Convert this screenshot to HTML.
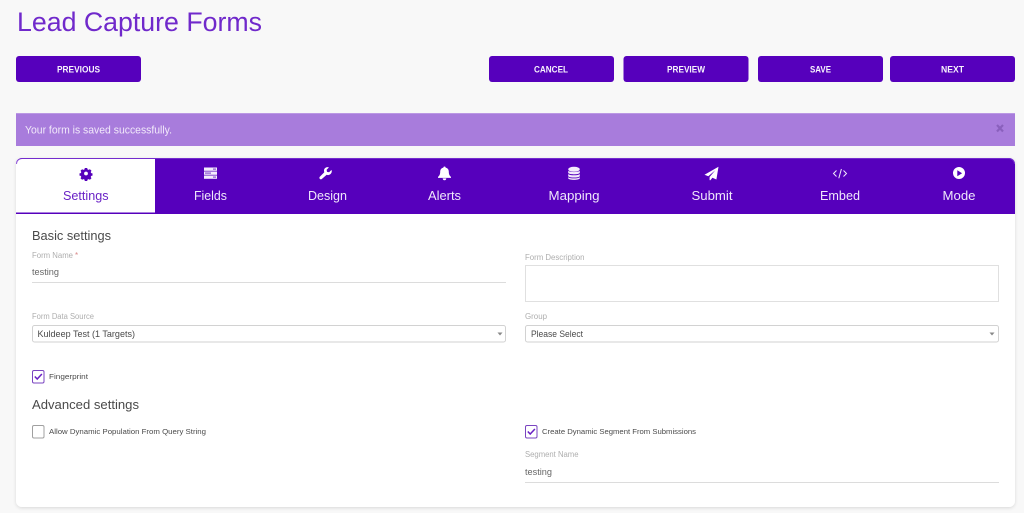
<!DOCTYPE html>
<html lang="en">
<head>
<meta charset="utf-8">
<title>Lead Capture Forms</title>
<style>
html,body{margin:0;padding:0;width:1024px;height:513px;overflow:hidden;background:#f8f8f8}
svg{display:block;font-family:"Liberation Sans",sans-serif;filter:blur(.3px)}
.btn{font-size:9px;font-weight:700;fill:#f7f2fd}
.tab{font-size:13px;fill:#efe6fb}
.lbl{font-size:8px;fill:#aeaeae}
.val{font-size:9px;fill:#666}
.sel{font-size:9px;fill:#4a4a4a}
.chk{font-size:7.5px;fill:#4a4a4a}
.hd{font-size:13px;fill:#4a4a4a}
</style>
</head>
<body>
<svg width="1024" height="513" viewBox="0 0 1024 513" xmlns="http://www.w3.org/2000/svg">
<defs>
<filter id="sh" x="-2%" y="-2%" width="104%" height="105%"><feDropShadow dx="0" dy="1" stdDeviation="1.5" flood-color="#000" flood-opacity=".13"/></filter>
</defs>
<rect width="1024" height="513" fill="#f8f8f8"/>

<text x="17" y="31" font-size="26.5" fill="#7029cb" textLength="245" lengthAdjust="spacingAndGlyphs">Lead Capture Forms</text>

<rect x="16" y="56" width="125" height="26" rx="3" fill="#5600bc"/>
<rect x="489" y="56" width="125" height="26" rx="3" fill="#5600bc"/>
<rect x="623.5" y="56" width="125" height="26" rx="3" fill="#5600bc"/>
<rect x="758" y="56" width="125" height="26" rx="3" fill="#5600bc"/>
<rect x="890" y="56" width="125" height="26" rx="3" fill="#5600bc"/>
<text class="btn" x="57" y="72.3" textLength="43" lengthAdjust="spacingAndGlyphs">PREVIOUS</text>
<text class="btn" x="534" y="72.3" textLength="34" lengthAdjust="spacingAndGlyphs">CANCEL</text>
<text class="btn" x="667" y="72.3" textLength="38" lengthAdjust="spacingAndGlyphs">PREVIEW</text>
<text class="btn" x="810" y="72.3" textLength="21" lengthAdjust="spacingAndGlyphs">SAVE</text>
<text class="btn" x="941" y="72.3" textLength="23" lengthAdjust="spacingAndGlyphs">NEXT</text>

<rect x="16" y="113" width="999" height="33" fill="#a87cdc"/>
<rect x="16" y="113" width="999" height="1" fill="#bb98e4"/>
<text x="25" y="133.5" font-size="11" fill="#f1e9fa" textLength="147" lengthAdjust="spacingAndGlyphs">Your form is saved successfully.</text>
<path d="M997 125l6 6.5M1003 125l-6 6.5" stroke="#8a60bd" stroke-width="2.2" fill="none"/>

<rect x="16" y="158" width="999" height="349" rx="6" fill="#fff" filter="url(#sh)"/>
<path d="M16 214V164a6 6 0 0 1 6-6H1009a6 6 0 0 1 6 6V214Z" fill="#5600bc"/>
<path d="M16 213V165a5.500 5.500 0 0 1 5.500-6H155V212.500H16Z" fill="#fff"/>
<path d="M16.500 164a5.500 5.500 0 0 1 5.500-5.500H1009a5.500 5.500 0 0 1 5.500 5.500" fill="none" stroke="#7f3bd4" stroke-width="1" opacity=".75"/>

<text class="tab" style="fill:#6a22c6" x="63" y="200" textLength="45.5" lengthAdjust="spacingAndGlyphs">Settings</text>
<text class="tab" x="194" y="200" textLength="33" lengthAdjust="spacingAndGlyphs">Fields</text>
<text class="tab" x="308" y="200" textLength="39" lengthAdjust="spacingAndGlyphs">Design</text>
<text class="tab" x="428" y="200" textLength="33" lengthAdjust="spacingAndGlyphs">Alerts</text>
<text class="tab" x="548.5" y="200" textLength="51" lengthAdjust="spacingAndGlyphs">Mapping</text>
<text class="tab" x="691.5" y="200" textLength="41" lengthAdjust="spacingAndGlyphs">Submit</text>
<text class="tab" x="820" y="200" textLength="40" lengthAdjust="spacingAndGlyphs">Embed</text>
<text class="tab" x="942.5" y="200" textLength="33" lengthAdjust="spacingAndGlyphs">Mode</text>

<!-- gear -->
<g transform="translate(86 173.500)" fill="#5600bc">
<path fill-rule="evenodd" d="M-1.200-5.500h2.400l.3 1.400 1.100.5 1.300-.7 1.600 1.600-.8 1.200.5 1.100 1.300.3v2.200l-1.300.3-.5 1.100.8 1.200-1.600 1.600-1.300-.7-1.100.5-.3 1.400h-2.400l-.3-1.400-1.100-.5-1.300.7-1.600-1.600.8-1.200-.5-1.100-1.300-.3v-2.200l1.300-.3.5-1.100-.8-1.200 1.600-1.600 1.300.7 1.100-.5ZM0-1.900a1.900 1.900 0 1 0 0 3.800a1.900 1.900 0 1 0 0-3.800Z"/>
</g>
<!-- fields -->
<g fill="#f3ecfc">
<rect x="204" y="167.500" width="13" height="3.300"/>
<rect x="204" y="171.500" width="13" height="3.300"/>
<rect x="204" y="175.500" width="13" height="3.300"/>
<rect x="213" y="168.500" width="3" height="1.200" fill="#8a52d2"/>
<rect x="205" y="172.500" width="6" height="1.200" fill="#8a52d2"/>
<rect x="213" y="176.500" width="3" height="1.200" fill="#8a52d2"/>
</g>
<!-- wrench -->
<path d="M321.800 179a1.500 1.500 0 0 1-2.100-2.100l4.600-4.700a3.800 3.800 0 0 1 .6-3.900 3.900 3.900 0 0 1 4.100-.9l-2.400 2.400.4 2.100 2.100.4 2.400-2.400a3.900 3.900 0 0 1-.9 4.100 3.800 3.800 0 0 1-3.900.8Z" fill="#fff"/>
<!-- bell -->
<path d="M444.500 166.500c.7 0 1.100.4 1.100 1.100 2.200.4 3.200 2.100 3.200 4.200 0 3 1 4 2.200 5.200v.9h-13v-.9c1.200-1.200 2.200-2.200 2.200-5.200 0-2.100 1-3.800 3.200-4.200 0-.7.400-1.100 1.100-1.100Zm-1.800 11.900h3.600a1.800 1.800 0 0 1-3.600 0Z" fill="#fff"/>
<!-- database -->
<g fill="#f3ecfc">
<ellipse cx="574" cy="169.300" rx="5.800" ry="2.500"/>
<path d="M568.200 170.800c1 1.700 10.600 1.700 11.600 0v2.100c-1 1.900-10.600 1.900-11.600 0Z"/>
<path d="M568.200 174c1 1.700 10.600 1.700 11.600 0v2.100c-1 1.900-10.600 1.900-11.600 0Z"/>
<path d="M568.200 177.100c1 1.700 10.600 1.700 11.600 0v1.300c-.6 2-11 2-11.600 0Z"/>
</g>
<!-- paper plane -->
<path d="M718.500 166.800l-2.100 12.700-4-1.700-2 2.500-.8-.2v-3.100l5.700-6.800-7 6.100-3.800-1.500Z" fill="#fff"/>
<!-- code -->
<path d="M836.500 170.500l-3 3 3 3M843.500 170.500l3 3-3 3M841.400 169l-2.600 9.200" stroke="#f1e9fb" stroke-width="1" fill="none"/>
<!-- play circle -->
<path fill-rule="evenodd" d="M959 167a6 6 0 1 0 0 12a6 6 0 1 0 0-12ZM957.300 170.200l4.800 3-4.800 3Z" fill="#fff"/>

<!-- form -->
<text class="hd" x="32" y="240" textLength="79" lengthAdjust="spacingAndGlyphs">Basic settings</text>
<text class="lbl" x="32" y="258" textLength="41" lengthAdjust="spacingAndGlyphs">Form Name</text>
<text x="75" y="258" font-size="8" fill="#d98a8a">*</text>
<text class="val" x="32" y="275" textLength="27" lengthAdjust="spacingAndGlyphs">testing</text>
<rect x="32" y="282" width="474" height="1" fill="#dcdcdc"/>

<text class="lbl" x="525" y="260" textLength="59.500" lengthAdjust="spacingAndGlyphs">Form Description</text>
<rect x="525.500" y="265.500" width="473" height="36" fill="#fff" stroke="#e0e0e0"/>

<text class="lbl" x="32" y="319" textLength="62" lengthAdjust="spacingAndGlyphs">Form Data Source</text>
<rect x="32.500" y="325.500" width="473" height="16.500" rx="2" fill="#fff" stroke="#d2d2d2"/>
<text class="sel" x="37.500" y="337" textLength="97.500" lengthAdjust="spacingAndGlyphs">Kuldeep Test (1 Targets)</text>
<path d="M497.500 332.500h5l-2.500 3Z" fill="#888"/>

<text class="lbl" x="525" y="319" textLength="22" lengthAdjust="spacingAndGlyphs">Group</text>
<rect x="525.500" y="325.500" width="473" height="16.500" rx="2" fill="#fff" stroke="#d2d2d2"/>
<text class="sel" x="531" y="337" textLength="52" lengthAdjust="spacingAndGlyphs">Please Select</text>
<path d="M989.500 332.500h5l-2.500 3Z" fill="#888"/>

<rect x="32.500" y="370.500" width="11.500" height="12.500" rx="1.500" fill="#fff" stroke="#7a44c0"/>
<path d="M34.800 376.500l2.400 2.500 4.700-5" stroke="#6a20c4" stroke-width="1.500" fill="none"/>
<text class="chk" x="49" y="379" textLength="39" lengthAdjust="spacingAndGlyphs">Fingerprint</text>

<text class="hd" x="32" y="409" textLength="107" lengthAdjust="spacingAndGlyphs">Advanced settings</text>

<rect x="32.500" y="425.500" width="11.500" height="12.500" rx="1.500" fill="#fff" stroke="#a0a0a0"/>
<text class="chk" x="49" y="434" textLength="157" lengthAdjust="spacingAndGlyphs">Allow Dynamic Population From Query String</text>

<rect x="525.500" y="425.500" width="11.500" height="12.500" rx="1.500" fill="#fff" stroke="#7a44c0"/>
<path d="M527.800 431.500l2.400 2.500 4.700-5" stroke="#6a20c4" stroke-width="1.500" fill="none"/>
<text class="chk" x="542" y="434" textLength="154" lengthAdjust="spacingAndGlyphs">Create Dynamic Segment From Submissions</text>

<text class="lbl" x="525" y="457" textLength="53.500" lengthAdjust="spacingAndGlyphs">Segment Name</text>
<text class="val" x="525" y="475" textLength="27" lengthAdjust="spacingAndGlyphs">testing</text>
<rect x="525" y="482" width="474" height="1" fill="#dcdcdc"/>
</svg>
</body>
</html>
